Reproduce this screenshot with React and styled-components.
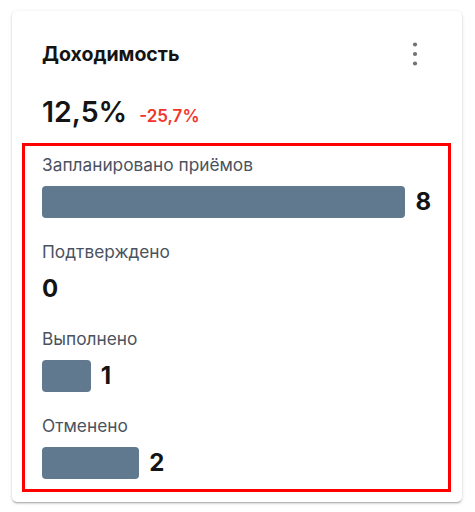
import React from "react";
import styled, { createGlobalStyle } from "styled-components";

const GlobalStyle = createGlobalStyle`
  html, body {
    margin: 0;
    padding: 0;
    background: #ffffff;
  }
  body {
    font-family: Inter, Roboto, "Noto Sans", "Liberation Sans", sans-serif;
    -webkit-font-smoothing: antialiased;
  }
  * { box-sizing: border-box; }
`;

const Page = styled.div`
  padding: 11px 13px 10px 12px;
`;

const Card = styled.section`
  width: 450px;
  background: #ffffff;
  border-radius: 5px;
  box-shadow: 0 2px 2px -1px rgba(0, 0, 0, 0.22), 0 1px 2px 0 rgba(0, 0, 0, 0.12),
    0 1px 4px 0 rgba(0, 0, 0, 0.1);
  padding: 29px 11px 10px 10px;
`;

const Header = styled.header`
  display: flex;
  align-items: center;
  justify-content: space-between;
  height: 28px;
  padding: 0 24px 0 20px;
`;

const Title = styled.h2`
  margin: 0;
  font-size: 19.5px;
  line-height: 28px;
  font-weight: 700;
  color: #141414;
`;

const MenuButton = styled.button`
  width: 24px;
  height: 28px;
  padding: 0;
  border: 0;
  background: transparent;
  display: flex;
  align-items: center;
  justify-content: center;
  cursor: pointer;
`;

const ValueRow = styled.div`
  display: flex;
  align-items: baseline;
  gap: 12px;
  margin-top: 26px;
  padding-left: 20px;
`;

const BigValue = styled.span`
  font-size: 28.5px;
  line-height: 36px;
  font-weight: 600;
  color: #141414;
`;

const Delta = styled.span`
  font-size: 17px;
  line-height: 20px;
  font-weight: 600;
  color: #f2352a;
`;

const Metrics = styled.div`
  margin-top: 13px;
  border: 3px solid #ff0000;
  padding: 7px 17px 10px;
  display: flex;
  flex-direction: column;
  gap: 22px;
`;

const Metric = styled.div`
  display: flex;
  flex-direction: column;
`;

const Label = styled.div`
  font-size: 17.3px;
  line-height: 24px;
  color: #4a5260;
  margin-bottom: 9px;
`;

const BarRow = styled.div`
  display: flex;
  align-items: center;
  gap: 10px;
  height: 32px;
`;

const Bar = styled.div`
  height: 32px;
  flex: 0 1 auto;
  min-width: 0;
  background: #60798f;
  border-radius: 4px;
`;

const Count = styled.span`
  flex: none;
  font-size: 24px;
  line-height: 32px;
  font-weight: 700;
  color: #141414;
`;

const DotsIcon = () => (
  <svg width="8" height="26" viewBox="0 0 8 26" aria-hidden="true">
    <circle cx="4" cy="3.5" r="2.1" fill="#727272" />
    <circle cx="4" cy="13" r="2.1" fill="#727272" />
    <circle cx="4" cy="22.5" r="2.1" fill="#727272" />
  </svg>
);

const data = [
  { label: "Запланировано приёмов", value: 8 },
  { label: "Подтверждено", value: 0 },
  { label: "Выполнено", value: 1 },
  { label: "Отменено", value: 2 },
];

export default function App() {
  const max = Math.max(...data.map((d) => d.value));
  return (
    <>
      <GlobalStyle />
      <Page>
        <Card>
          <Header>
            <Title>Доходимость</Title>
            <MenuButton aria-label="Меню">
              <DotsIcon />
            </MenuButton>
          </Header>
          <ValueRow>
            <BigValue>12,5%</BigValue>
            <Delta>-25,7%</Delta>
          </ValueRow>
          <Metrics>
            {data.map((d) => (
              <Metric key={d.label}>
                <Label>{d.label}</Label>
                <BarRow>
                  {d.value > 0 && (
                    <Bar style={{ width: `${(d.value / max) * 100}%` }} />
                  )}
                  <Count>{d.value}</Count>
                </BarRow>
              </Metric>
            ))}
          </Metrics>
        </Card>
      </Page>
    </>
  );
}
